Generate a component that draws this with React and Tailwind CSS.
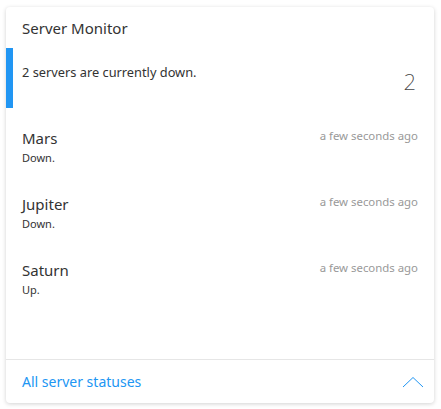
import React from 'react';

const servers = [
  { name: 'Mars', status: 'Down.', time: 'a few seconds ago' },
  { name: 'Jupiter', status: 'Down.', time: 'a few seconds ago' },
  { name: 'Saturn', status: 'Up.', time: 'a few seconds ago' },
];

const App = () => {
  return (
    <div className="w-[441px] h-[409px] bg-white pt-[7px] pl-[6px]" style={{ fontFamily: '"Noto Sans", "Open Sans", sans-serif' }}>
      <div className="w-[428px] h-[396px] bg-white rounded-sm shadow-[0_1px_4px_rgba(0,0,0,0.18)] flex flex-col text-[#333]">
        {/* Header */}
        <div className="px-4 pt-[11px] h-[41px] text-[15px] leading-5">Server Monitor</div>

        {/* Summary */}
        <div className="flex h-[60px] border-l-[7px] border-[#2196f3] pl-[9px] pr-[18px]">
          <div className="flex-1 pt-[16px] text-[12.8px] leading-4">2 servers are currently down.</div>
          <div className="self-end pb-[15px] text-[22px] font-extralight leading-6 text-[#444]">2</div>
        </div>

        {/* Server list */}
        <div className="flex-1 flex flex-col pt-[20px]">
          {servers.map((s) => (
            <div key={s.name} className="flex px-4 h-[66px]">
              <div className="flex-1">
                <div className="text-[15px] leading-5">{s.name}</div>
                <div className="text-[11px] leading-4 mt-[2px]">{s.status}</div>
              </div>
              <div className="text-[11.4px] leading-4 text-[#999]">{s.time}</div>
            </div>
          ))}
        </div>

        {/* Footer */}
        <div className="h-[44px] border-t border-[#e6e6e6] flex items-center justify-between pl-4 pr-[10px]">
          <span className="text-[14px] text-[#2196f3]">All server statuses</span>
          <svg width="22" height="12" viewBox="0 0 22 12" fill="none" stroke="#2196f3" strokeWidth="1">
            <path d="M1 11 L11 1.5 L21 11" />
          </svg>
        </div>
      </div>
    </div>
  );
};

export default App;
